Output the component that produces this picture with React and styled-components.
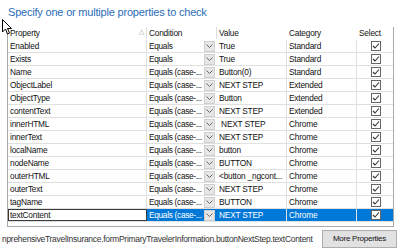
import React from "react";
import styled, { createGlobalStyle } from "styled-components";

const GlobalStyle = createGlobalStyle`
  body {
    margin: 0;
    background: #fff;
    font-family: "Liberation Sans", Arial, sans-serif;
  }
`;

const Page = styled.div`
  position: relative;
  width: 400px;
  height: 250px;
  overflow: hidden;
  background: #fff;
`;

const Title = styled.h1`
  margin: 0;
  padding: 6px 0 0 8px;
  height: 27px;
  box-sizing: border-box;
  font-size: 11px;
  letter-spacing: -0.2px;
  font-weight: normal;
  color: #2b6cb8;
  white-space: nowrap;
`;

const Grid = styled.div`
  margin-left: 7px;
  width: 387px;
  height: 200px;
  box-sizing: border-box;
  border: 1px solid #a9a9a9;
  border-top: none;
  font-size: 8.3px;
  letter-spacing: -0.2px;
  color: #111;
`;

const Row = styled.div`
  display: grid;
  grid-template-columns: 139px 70px 70px 70px 36px;
  height: 13px;
  box-sizing: border-box;
  border-bottom: 1px solid ${(p) => (p.$header ? "transparent" : "#e0e0e0")};
`;

const Cell = styled.div`
  position: relative;
  display: flex;
  align-items: center;
  box-sizing: border-box;
  padding-left: 2px;
  white-space: nowrap;
  overflow: hidden;
  border-right: 1px solid ${(p) => (p.$noLine ? "transparent" : "#e0e0e0")};
  background: ${(p) => (p.$selected ? "#0078d7" : "transparent")};
  color: ${(p) => (p.$selected ? "#fff" : "inherit")};
  justify-content: ${(p) => (p.$center ? "center" : "flex-start")};
`;

const EditCell = styled(Cell)`
  border: 1px solid #3a3a3a;
  padding-left: 1px;
  background: #fff;
`;

const SortMark = styled.span`
  position: absolute;
  right: 2px;
  top: 1px;
  font-size: 7px;
  color: #a0a0a0;
`;

const CondText = styled.span`
  flex: 1;
  overflow: hidden;
  letter-spacing: -0.3px;
`;

const DropButton = styled.span`
  flex: none;
  width: 11px;
  height: 11px;
  margin: 0 1px 0 2px;
  box-sizing: border-box;
  background: #e6e6e6;
  border: 1px solid #cfcfcf;
  display: flex;
  align-items: center;
  justify-content: center;
`;

const Check = styled.span`
  width: 10px;
  height: 10px;
  box-sizing: border-box;
  border: 1px solid #666;
  background: #fff;
  display: flex;
  align-items: center;
  justify-content: center;
`;

const Footer = styled.div`
  display: flex;
  align-items: center;
  justify-content: space-between;
  height: 23px;
  padding: 0 3px 0 2px;
`;

const Path = styled.span`
  font-size: 8.5px;
  letter-spacing: -0.3px;
  color: #333;
  white-space: nowrap;
`;

const Button = styled.button`
  width: 75px;
  height: 18px;
  padding: 0;
  background: #e1e1e1;
  border: 1px solid #adadad;
  font-family: inherit;
  font-size: 8px;
  letter-spacing: -0.25px;
  color: #111;
  white-space: nowrap;
`;

const Cursor = styled.svg`
  position: absolute;
  left: 2px;
  top: 19px;
`;

const rows = [
  ["Enabled", "Equals", "True", "Standard"],
  ["Exists", "Equals", "True", "Standard"],
  ["Name", "Equals (case-...", "Button(0)", "Standard"],
  ["ObjectLabel", "Equals (case-...", "NEXT STEP", "Extended"],
  ["ObjectType", "Equals (case-...", "Button", "Extended"],
  ["contentText", "Equals (case-...", "NEXT STEP", "Extended"],
  ["innerHTML", "Equals (case-...", "\u00a0NEXT STEP", "Chrome"],
  ["innerText", "Equals (case-...", "NEXT STEP", "Chrome"],
  ["localName", "Equals (case-...", "button", "Chrome"],
  ["nodeName", "Equals (case-...", "BUTTON", "Chrome"],
  ["outerHTML", "Equals (case-...", "<button _ngcont...", "Chrome"],
  ["outerText", "Equals (case-...", "NEXT STEP", "Chrome"],
  ["tagName", "Equals (case-...", "BUTTON", "Chrome"],
  ["textContent", "Equals (case-...", "NEXT STEP", "Chrome"],
];

const Chevron = () => (
  <svg width="7" height="4" viewBox="0 0 7 4">
    <path d="M0.5 0.5 L3.5 3.5 L6.5 0.5" fill="none" stroke="#666" strokeWidth="1" />
  </svg>
);

const Tick = () => (
  <svg width="8" height="8" viewBox="0 0 8 8">
    <path d="M1 4 L3 6 L7 1.5" fill="none" stroke="#333" strokeWidth="1.1" />
  </svg>
);

const App = () => {
  return (
    <Page>
      <GlobalStyle />
      <Title>Specify one or multiple properties to check</Title>
      <Grid>
        <Row $header>
          <Cell>
            Property
            <SortMark>△</SortMark>
          </Cell>
          <Cell>Condition</Cell>
          <Cell $noLine>Value</Cell>
          <Cell $noLine>Category</Cell>
          <Cell $noLine>Select</Cell>
        </Row>
        {rows.map(([prop, cond, value, cat], i) => {
          const sel = i === rows.length - 1;
          const PropCell = sel ? EditCell : Cell;
          return (
            <Row key={prop}>
              <PropCell>{prop}</PropCell>
              <Cell $selected={sel} $noLine style={{ paddingRight: 0 }}>
                <CondText>{cond}</CondText>
                <DropButton>
                  <Chevron />
                </DropButton>
              </Cell>
              <Cell $selected={sel}>{value}</Cell>
              <Cell $selected={sel}>{cat}</Cell>
              <Cell $selected={sel} $noLine $center>
                <Check>
                  <Tick />
                </Check>
              </Cell>
            </Row>
          );
        })}
      </Grid>
      <Footer>
        <Path>nprehensiveTravelInsurance.formPrimaryTravelerInformation.buttonNextStep.textContent</Path>
        <Button>More Properties</Button>
      </Footer>
      <Cursor width="11" height="17" viewBox="0 0 11 17">
        <path d="M0.5 0.5 L0.5 13 L3.5 10 L5.5 15 L7.5 14 L5.5 9.5 L9.5 9.5 Z" fill="#fff" stroke="#000" strokeWidth="1" />
      </Cursor>
    </Page>
  );
};

export default App;
